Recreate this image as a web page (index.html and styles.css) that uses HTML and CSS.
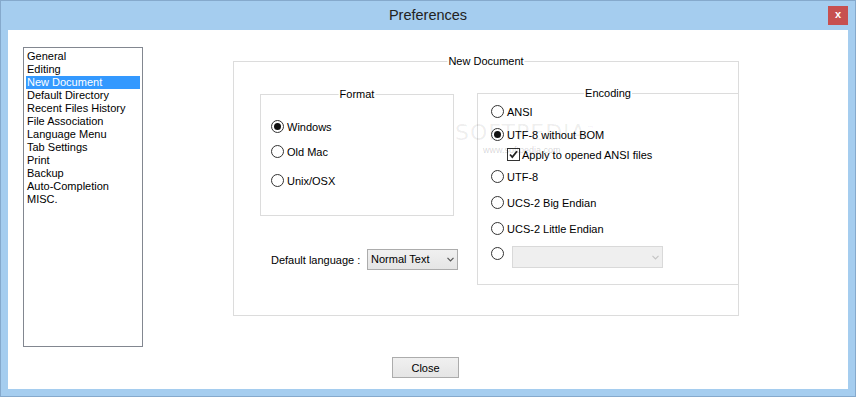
FILE: index.html
```html
<!DOCTYPE html>
<html lang="en">
<head>
    <meta charset="UTF-8">
    <title>Preferences</title>
    <link rel="stylesheet" href="styles.css">
</head>
<body>

<div class="window">
    <div class="titlebar">
        <span></span>
        <span class="title">Preferences</span>
        <span class="close-x">x</span>
    </div>

    <div class="client">
        <div class="top-row">
            <!-- Category list -->
            <ul class="listbox">
                <li>General</li>
                <li>Editing</li>
                <li class="selected">New Document</li>
                <li>Default Directory</li>
                <li>Recent Files History</li>
                <li>File Association</li>
                <li>Language Menu</li>
                <li>Tab Settings</li>
                <li>Print</li>
                <li>Backup</li>
                <li>Auto-Completion</li>
                <li>MISC.</li>
            </ul>

            <!-- New Document page -->
            <div class="group main-group">
                <span class="group-title">New Document</span>

                <div class="left-col">
                    <div class="group format-group">
                        <span class="group-title">Format</span>
                        <div class="opt"><span class="radio checked"></span>Windows</div>
                        <div class="opt"><span class="radio"></span>Old Mac</div>
                        <div class="opt"><span class="radio"></span>Unix/OSX</div>
                    </div>

                    <div class="lang-row">
                        <span class="lang-label">Default language :</span>
                        <div class="combo">
                            Normal Text
                            <svg class="chev" width="7" height="5" viewBox="0 0 7 5"><path d="M0.5 0.8 L3.5 3.8 L6.5 0.8" fill="none" stroke="#555" stroke-width="1.2"/></svg>
                        </div>
                    </div>
                </div>

                <div class="group encoding-group">
                    <span class="group-title">Encoding</span>
                    <div class="opt"><span class="radio"></span>ANSI</div>
                    <div class="opt"><span class="radio checked"></span>UTF-8 without BOM</div>
                    <div class="opt sub">
                        <span class="checkbox">
                            <svg width="11" height="11" viewBox="0 0 11 11"><path d="M2 5.5 L4.3 8 L9 2.2" fill="none" stroke="#222" stroke-width="1.8"/></svg>
                        </span>Apply to opened ANSI files
                    </div>
                    <div class="opt"><span class="radio"></span>UTF-8</div>
                    <div class="opt"><span class="radio"></span>UCS-2 Big Endian</div>
                    <div class="opt"><span class="radio"></span>UCS-2 Little Endian</div>
                    <div class="opt combo-opt">
                        <span class="radio"></span>
                        <div class="combo disabled">
                            <svg class="chev" width="7" height="5" viewBox="0 0 7 5"><path d="M0.5 0.8 L3.5 3.8 L6.5 0.8" fill="none" stroke="#c4c4c4" stroke-width="1.2"/></svg>
                        </div>
                    </div>
                </div>
            </div>
        </div>

        <div class="button-row">
            <button class="btn">Close</button>
        </div>

        <!-- watermark on top of the screenshot -->
        <div class="watermark">
            <span class="wm-big">SOFTPEDIA<sup>™</sup></span>
            <span class="wm-small">www.softpedia.com</span>
        </div>
    </div>
</div>

</body>
</html>
```

FILE: styles.css
```css
/* Whole page */
body {
    margin: 0;
    padding: 0;
    font-family: "Liberation Sans", Arial, sans-serif;
    font-size: 11px;
    color: #000;
    background: #fff;
}

/* Window frame */
.window {
    width: 856px;
    height: 397px;
    box-sizing: border-box;
    border: 1px solid #85a9cc;
    background-color: #a5cdef;
    display: flex;
    flex-direction: column;
}

.titlebar {
    height: 29px;
    display: grid;
    grid-template-columns: 1fr auto 1fr;
    align-items: start;
}

.title {
    padding-top: 6px;
    font-size: 14.5px;
    color: #222;
}

.close-x {
    justify-self: end;
    width: 20px;
    height: 19px;
    margin-top: 5px;
    margin-right: 7px;
    background-color: #c75050;
    color: #fff;
    font-weight: bold;
    font-size: 11px;
    line-height: 17px;
    text-align: center;
}

/* Client area */
.client {
    position: relative;
    margin: 0 7px;
    height: 359px;
    background-color: #fff;
    padding: 17px 0 0 15px;
    box-sizing: border-box;
}

.top-row {
    display: flex;
    align-items: flex-start;
}

/* Category list */
.listbox {
    list-style: none;
    margin: 0;
    padding: 2px 1px 1px;
    width: 120px;
    height: 300px;
    box-sizing: border-box;
    border: 1px solid #828790;
}

.listbox li {
    height: 13px;
    line-height: 13px;
    padding-left: 2px;
    white-space: nowrap;
}

.listbox li.selected {
    margin-left: 1px;
    margin-right: 1px;
    padding-left: 1px;
    background-color: #3399ff;
    color: #fff;
}

/* Group boxes */
.group {
    position: relative;
    border: 1px solid #dcdcdc;
    box-sizing: border-box;
}

.group-title {
    position: absolute;
    top: -7px;
    left: 50%;
    transform: translateX(-50%);
    background: #fff;
    padding: 0 1px;
    line-height: 13px;
    white-space: nowrap;
}

.main-group {
    margin-left: 90px;
    margin-top: 14px;
    width: 506px;
    height: 255px;
    padding: 31px 0 0 26px;
    display: flex;
    align-items: flex-start;
}

.left-col {
    width: 194px;
    flex-shrink: 0;
}

.format-group {
    margin-top: 1px;
    width: 194px;
    height: 122px;
    padding: 25px 0 0 10px;
    display: grid;
    grid-template-rows: 25px 29px 14px;
}

.encoding-group {
    flex-shrink: 0;
    margin-left: 23px;
    width: 262px;
    height: 192px;
    padding: 11px 0 0 13px;
    display: grid;
    grid-template-rows: 23px 20px 22px 26px 26px 24px 22px;
}

/* Options */
.opt {
    display: flex;
    align-items: flex-start;
    height: 14px;
    line-height: 14px;
    white-space: nowrap;
}

.radio {
    width: 13px;
    height: 13px;
    box-sizing: border-box;
    border: 1px solid #333;
    border-radius: 50%;
    background: #fff;
    margin-right: 3px;
    flex-shrink: 0;
    display: flex;
    align-items: center;
    justify-content: center;
}

.radio.checked::after {
    content: "";
    width: 7px;
    height: 7px;
    border-radius: 50%;
    background: #111;
}

.opt.sub {
    padding-left: 16px;
}

.checkbox {
    width: 13px;
    height: 13px;
    box-sizing: border-box;
    border: 1px solid #333;
    background: #fff;
    margin-right: 2px;
    display: flex;
    align-items: center;
    justify-content: center;
}

.combo-opt {
    height: 22px;
}

.combo-opt .radio {
    margin-top: 1px;
    margin-right: 8px;
}

/* Combo boxes */
.lang-row {
    display: flex;
    align-items: center;
    margin-top: 33px;
    padding-left: 11px;
}

.lang-label {
    width: 96px;
    flex-shrink: 0;
}

.combo {
    flex-shrink: 0;
    width: 91px;
    height: 21px;
    box-sizing: border-box;
    border: 1px solid #acacac;
    background: linear-gradient(#f0f0f0, #e5e5e5);
    padding-left: 3px;
    line-height: 19px;
    display: flex;
    align-items: center;
    justify-content: space-between;
    padding-right: 3px;
}

.combo.disabled {
    width: 151px;
    height: 22px;
    border-color: #d9d9d9;
    background: #efefef;
    justify-content: flex-end;
}

/* Close button */
.button-row {
    margin-top: 10px;
    padding-left: 369px;
}

.btn {
    width: 67px;
    height: 21px;
    border: 1px solid #acacac;
    background: linear-gradient(#f0f0f0, #e5e5e5);
    font-family: "Liberation Sans", Arial, sans-serif;
    font-size: 11px;
    color: #000;
    padding: 0;
}

/* Watermark overlay */
.watermark {
    position: absolute;
    left: 447px;
    top: 90px;
    pointer-events: none;
    display: flex;
    flex-direction: column;
}

.wm-big {
    font-family: "DejaVu Sans", sans-serif;
    font-size: 22px;
    letter-spacing: 1px;
    color: rgba(0, 0, 0, 0.07);
}

.wm-big sup {
    font-size: 8px;
}

.wm-small {
    margin-left: 28px;
    margin-top: 0;
    font-size: 9px;
    color: rgba(0, 0, 0, 0.18);
}
```
